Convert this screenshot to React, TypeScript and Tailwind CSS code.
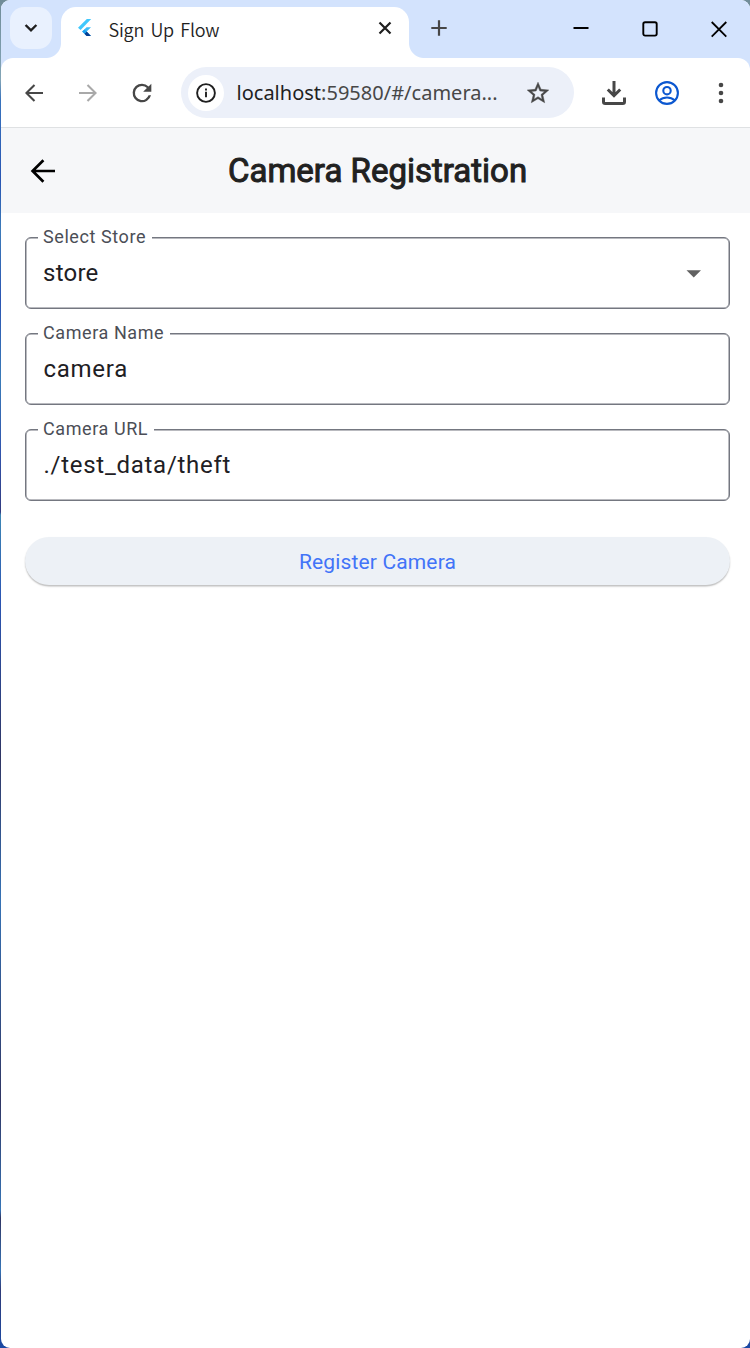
import React from "react";

function TabStrip() {
  return (
    <div className="flex h-[58px] bg-[#d3e3fd]">
      <button className="ml-[9px] mt-[7px] flex h-[42px] w-[42px] items-center justify-center rounded-[14px] bg-[#e9f1fe]">
        <svg width="14" height="10" viewBox="0 0 14 10" fill="none" stroke="#1f1f1f" strokeWidth="2.4">
          <path d="M1.6 2L7 7.4 12.4 2" />
        </svg>
      </button>
      <div className="relative ml-[9px] mt-[7px] flex h-[51px] w-[348px] items-center rounded-t-[15px] bg-white">
        <span className="absolute -left-[15px] bottom-0 h-[15px] w-[15px] bg-[radial-gradient(circle_at_0_0,transparent_14.5px,white_15.5px)]" />
        <span className="absolute -right-[15px] bottom-0 h-[15px] w-[15px] bg-[radial-gradient(circle_at_100%_0,transparent_14.5px,white_15.5px)]" />
        <svg className="mb-[9px] ml-[15px]" width="16" height="20" viewBox="0 0 16 20">
          <path d="M10.8 1H15.2L4.6 12 2 9.8Z" fill="#41c8fc" />
          <path d="M10.6 9.2H15L10.7 13.6 15 18H10.6L6.2 13.6Z" fill="#3dbdf8" />
          <path d="M8.4 15.8L10.7 13.6 15 18H10.6Z" fill="#063e92" />
          <path d="M6.2 13.6L8.4 11.4 10.7 13.6 8.4 15.8Z" fill="#1c9fee" />
        </svg>
        <span className="mb-[7px] ml-[16.5px] w-[240px] whitespace-nowrap font-['Noto_Sans_CJK_KR','Noto_Sans',sans-serif] text-[18px] font-[350] leading-[26px] tracking-[-0.2px] text-[#1f1f1f] [word-spacing:2.5px]">
          Sign Up Flow
        </span>
        <svg className="mb-[9px] ml-[29.5px]" width="14" height="14" viewBox="0 0 14 14" stroke="#1f1f1f" strokeWidth="2.2">
          <path d="M1.5 1.5l11 11M12.5 1.5l-11 11" />
        </svg>
      </div>
      <svg className="ml-[22px] mt-[20px]" width="16" height="16" viewBox="0 0 16 16" stroke="#474747" strokeWidth="2.2">
        <path d="M8 .3v15.4M.3 8h15.4" />
      </svg>
      <div className="ml-auto mr-[23px] mt-[20px] flex gap-[53px]">
        <svg width="16" height="18" viewBox="0 0 16 18"><path d="M.5 7h15v2H.5z" /></svg>
        <svg width="16" height="18" viewBox="0 0 16 18" fill="none" stroke="#000" strokeWidth="1.9">
          <rect x="1.3" y="2.2" width="13.4" height="13.4" rx="1.8" />
        </svg>
        <svg width="16" height="18" viewBox="0 0 16 18" stroke="#000" strokeWidth="1.8">
          <path d="M.7 2l14.6 14.6M15.3 2L.7 16.6" />
        </svg>
      </div>
    </div>
  );
}

function Toolbar() {
  return (
    <div className="bg-[#d3e3fd]">
      <div className="flex h-[70px] items-center rounded-t-[12px] border-b border-[#dfe1e3] bg-white">
        <svg className="ml-[24px]" width="18" height="18" viewBox="0 0 18 18" fill="none" stroke="#474747" strokeWidth="2.1">
          <path d="M18 9H1.8M9.5.9L1.4 9l8.1 8.1" />
        </svg>
        <svg className="ml-[36px]" width="18" height="18" viewBox="0 0 18 18" fill="none" stroke="#a9a9a9" strokeWidth="2.1">
          <path d="M0 9h16.2M8.5.9L16.6 9l-8.1 8.1" />
        </svg>
        <svg className="ml-[31px]" width="28" height="28" viewBox="0 0 24 24" fill="#474747">
          <path d="M17.65 6.35A7.958 7.958 0 0 0 12 4a8 8 0 1 0 7.73 10h-2.08A6 6 0 1 1 12 6c1.66 0 3.14.69 4.22 1.78L13 11h7V4z" />
        </svg>
        <div className="ml-[25px] flex h-[51px] w-[393px] items-center rounded-full bg-[#ecf0f9]">
          <div className="ml-[7px] flex h-[36px] w-[36px] items-center justify-center rounded-full bg-white">
            <svg width="20" height="20" viewBox="0 0 20 20" fill="none" stroke="#1f1f1f" strokeWidth="1.9">
              <circle cx="10" cy="10" r="8.9" />
              <path d="M10 8.8v5.4M10 5.4v2" />
            </svg>
          </div>
          <span className="ml-[12.5px] w-[262.5px] whitespace-nowrap font-['Noto_Sans',sans-serif] text-[20px] leading-[28px] tracking-[0.01px] text-[#474747]">
            <span className="text-[#1f1f1f]">localhost</span>:59580/#/camera...
          </span>
          <svg className="ml-[26px]" width="26" height="26" viewBox="0 0 24 24" fill="#474747">
            <path d="M22 9.24l-7.19-.62L12 2 9.19 8.63 2 9.24l5.46 4.73L5.82 21 12 17.27 18.18 21l-1.63-7.03zM12 15.4l-3.76 2.27 1-4.28-3.32-2.88 4.38-.38L12 6.1l1.71 4.04 4.38.38-3.32 2.88 1 4.28z" stroke="#474747" strokeWidth="0.4" />
          </svg>
        </div>
        <svg className="ml-[28px]" width="24" height="26" viewBox="0 0 24 26" fill="none" stroke="#474747" strokeWidth="3">
          <path d="M12 1v14.5M5.8 9.5L12 15.7l6.2-6.2M1.5 17.5v4.3q0 1.7 1.7 1.7h17.6q1.7 0 1.7-1.7v-4.3" />
        </svg>
        <svg className="ml-[29px]" width="24" height="24" viewBox="0 0 24 24" fill="none" stroke="#0b57d0" strokeWidth="2.1">
          <circle cx="12" cy="12" r="10.9" />
          <circle cx="12" cy="9.7" r="3.7" />
          <path d="M4.3 19.3C8.5 15.6 15.5 15.6 19.7 19.3" />
        </svg>
        <svg className="ml-[39px]" width="6" height="22" viewBox="0 0 6 22" fill="#474747">
          <circle cx="3" cy="3" r="2.3" /><circle cx="3" cy="11" r="2.3" /><circle cx="3" cy="19" r="2.3" />
        </svg>
      </div>
    </div>
  );
}

function Field({ label, value, dropdown }: { label: string; value: string; dropdown?: boolean }) {
  return (
    <div className="relative flex h-[72px] items-center justify-between rounded-[6px] border border-[#747780] pl-[17px] pr-[28px] shadow-[inset_0_0_0_0.5px_#747780]">
      <span className="absolute -top-[12px] left-[12px] whitespace-nowrap bg-white pl-[5px] pr-[6px] font-[Roboto,sans-serif] text-[18px] leading-[22px] tracking-[0.58px] text-[#4b4e56]">
        {label}
      </span>
      <span
        className={`font-[Roboto,sans-serif] text-[24px] leading-[36px] text-[#1e2024] ${dropdown ? "tracking-[0.25px]" : "pl-[0.5px] tracking-[0.73px]"}`}
      >
        {value}
      </span>
      {dropdown && (
        <svg className="mt-[2px]" width="15" height="8" viewBox="0 0 15 8" fill="#616161"><path d="M.5.2H15L7.75 7.5z" /></svg>
      )}
    </div>
  );
}

export default function App() {
  return (
    <div className="h-[1348px] w-[750px] overflow-hidden bg-[linear-gradient(to_bottom,#708c98_0,#83a5b7_80px,#3873bd_100px,#2855b3_180px,#3c7bb9_230px,#2b55b3_300px,#3a7bb8_380px,#3155ae_450px,#313b80_512px,#3c86b5_515px,#2b55b3_600px,#2f3563_760px,#3672b5_900px,#2f3563_1100px,#3674b6_1210px,#2f3563_1218px,#3674b6_1270px,#2f3b78_1290px,#1b49a4_1348px)] pl-px">
      <div className="flex h-full flex-col overflow-hidden rounded-[9px] bg-white">
        <TabStrip />
        <Toolbar />
        <header className="flex h-[85px] items-center bg-[#f6f7f9]">
          <svg className="ml-[29px]" width="26" height="24" viewBox="0 0 26 24" fill="none" stroke="#000" strokeWidth="2.7">
            <path d="M25 12H3M13.4 1.2L2.6 12l10.8 10.8" />
          </svg>
          <h1 className="ml-[172px] whitespace-nowrap font-[Roboto,sans-serif] text-[33px] font-normal leading-[42px] text-[#212121] [-webkit-text-stroke:1px_#212121]">
            Camera Registration
          </h1>
        </header>
        <main className="flex flex-col pl-[24px] pr-[20px] pt-[24px]">
          <div className="flex flex-col gap-[24px]">
            <Field label="Select Store" value="store" dropdown />
            <Field label="Camera Name" value="camera" />
            <Field label="Camera URL" value="./test_data/theft" />
          </div>
          <button className="mt-[36px] h-[48px] rounded-full bg-[#edf1f6] pt-[2px] font-[Roboto,sans-serif] text-[21px] leading-[30px] tracking-[0.15px] text-[#4274f8] shadow-[0_1.5px_1.5px_rgba(0,0,0,0.25)]">
            Register Camera
          </button>
        </main>
      </div>
    </div>
  );
}
